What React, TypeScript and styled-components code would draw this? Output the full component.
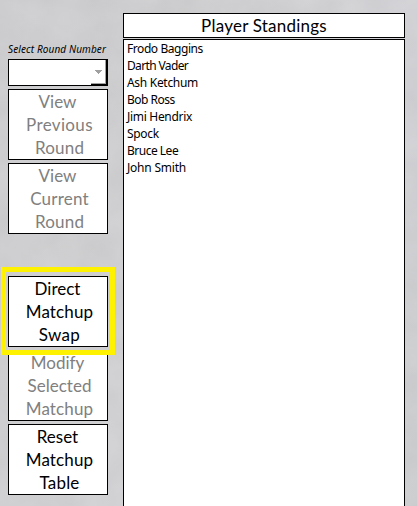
import React from 'react';
import styled, { createGlobalStyle } from 'styled-components';

const GlobalStyle = createGlobalStyle`
  html, body { margin: 0; padding: 0; overflow: hidden; background: #cecfd1; }
  *, *::before, *::after { box-sizing: border-box; }
`;

const Page = styled.main`
  position: relative;
  display: flex;
  gap: 15px;
  width: 417px;
  height: 506px;
  padding: 13px 12px 0 8px;
  overflow: hidden;
  background: linear-gradient(115deg, #cbcbce 0%, #cececf 30%, #d4d4d8 60%, #c9cacc 100%);
  color: #000;
`;

const Texture = styled.svg`
  position: absolute;
  inset: 0;
  width: 100%;
  height: 100%;
`;

const Sidebar = styled.aside`
  position: relative;
  width: 100px;
  flex: none;
  display: flex;
  flex-direction: column;
  padding-top: 29px;
`;

const FieldLabel = styled.label`
  height: 17px;
  font: italic 10px/15px "Noto Sans", sans-serif;
  letter-spacing: 0.12px;
  white-space: nowrap;
`;

const Combo = styled.div`
  height: 27px;
  margin-bottom: 3px;
  border: 1px solid #000;
  background: #fff;
  display: flex;
  justify-content: flex-end;
`;

const ComboArrow = styled.div`
  width: 16px;
  height: 25px;
  border-right: 1px solid #000;
  border-bottom: 1px solid #000;
  box-shadow: inset -1px -1px 0 #a0a0a0;
  display: flex;
  align-items: center;
  justify-content: center;
`;

const Group = styled.div`
  display: flex;
  flex-direction: column;
  gap: 3px;
  & + & { margin-top: 42px; }
`;

const ActionButton = styled.button<{ $highlighted?: boolean }>`
  position: relative;
  z-index: ${p => (p.$highlighted ? 1 : 0)};
  height: 71px;
  margin: 0;
  padding: 0 0 0 3px;
  border: 1px solid #000;
  background: #fff;
  color: #000;
  font: 17px/23px Lato, sans-serif;
  display: flex;
  flex-direction: column;
  align-items: center;
  &:disabled { color: #808080; }
  &::after {
    content: '';
    display: ${p => (p.$highlighted ? 'block' : 'none')};
    position: absolute;
    inset: -10px -8px -9px -8px;
    border: 5px solid #fff200;
  }
`;

const Line = styled.span<{ $tracking: number }>`
  display: block;
  height: 23px;
  letter-spacing: ${p => p.$tracking}px;
  white-space: nowrap;
  &:first-child { margin-right: 4px; }
`;

const Standings = styled.section`
  position: relative;
  flex: 1;
  display: flex;
  flex-direction: column;
  gap: 1px;
`;

const Title = styled.h1`
  margin: 0;
  height: 25px;
  border: 1px solid #000;
  background: #fff;
  font: 17px/23px Lato, sans-serif;
  letter-spacing: 0.22px;
  text-align: center;
`;

const PlayerList = styled.ul`
  list-style: none;
  flex: 1;
  margin: 0;
  padding: 0 3px;
  border: solid #000;
  border-width: 1px 1px 0;
  background: #fff;
`;

const Player = styled.li<{ $tracking: number }>`
  height: 17px;
  font: 12px/17px "Noto Sans", sans-serif;
  letter-spacing: ${p => p.$tracking}px;
  white-space: nowrap;
`;

type Action = { lines: [string, number][]; disabled?: boolean; highlighted?: boolean };

const roundActions: Action[] = [
  { lines: [['View', 0], ['Previous', 0.35], ['Round', 0.2]], disabled: true },
  { lines: [['View', 0], ['Current', 0.2], ['Round', 0.2]], disabled: true },
];

const matchupActions: Action[] = [
  { lines: [['Direct', 0], ['Matchup', 0.15], ['Swap', 0.3]], highlighted: true },
  { lines: [['Modify', 0], ['Selected', 0], ['Matchup', 0.15]], disabled: true },
  { lines: [['Reset', 0], ['Matchup', 0.15], ['Table', 0.2]] },
];

const players: [string, number][] = [
  ['Frodo Baggins', -0.43], ['Darth Vader', -0.64], ['Ash Ketchum', -0.3], ['Bob Ross', -0.5],
  ['Jimi Hendrix', -0.3], ['Spock', -0.3], ['Bruce Lee', -0.5], ['John Smith', -0.22],
];

function Actions({ items }: { items: Action[] }) {
  return (
    <Group>
      {items.map(a => (
        <ActionButton key={a.lines.map(l => l[0]).join(' ')} disabled={a.disabled} $highlighted={a.highlighted}>
          {a.lines.map(([text, tracking]) => <Line key={text} $tracking={tracking}>{text}</Line>)}
        </ActionButton>
      ))}
    </Group>
  );
}

export default function App() {
  return (
    <>
      <GlobalStyle />
      <Page>
        <Texture aria-hidden="true">
          <filter id="stone" x="0" y="0" width="100%" height="100%" colorInterpolationFilters="sRGB">
            <feTurbulence type="fractalNoise" baseFrequency="0.025" numOctaves="4" seed="8" />
            <feColorMatrix values="0.13 0 0 0 0.745  0.13 0 0 0 0.745  0.13 0 0 0 0.757  0 0 0 0 0.35" />
          </filter>
          <rect width="100%" height="100%" filter="url(#stone)" />
        </Texture>
        <Sidebar>
          <FieldLabel>Select Round Number</FieldLabel>
          <Combo>
            <ComboArrow>
              <svg width="7" height="4" viewBox="0 0 7 4" shapeRendering="crispEdges"><path d="M0 0h7v1H6v1H5v1H4v1H3V3H2V2H1V1H0z" fill="#a0a0a0" /></svg>
            </ComboArrow>
          </Combo>
          <Actions items={roundActions} />
          <Actions items={matchupActions} />
        </Sidebar>
        <Standings>
          <Title>Player Standings</Title>
          <PlayerList>
            {players.map(([name, tracking]) => <Player key={name} $tracking={tracking}>{name}</Player>)}
          </PlayerList>
        </Standings>
      </Page>
    </>
  );
}
